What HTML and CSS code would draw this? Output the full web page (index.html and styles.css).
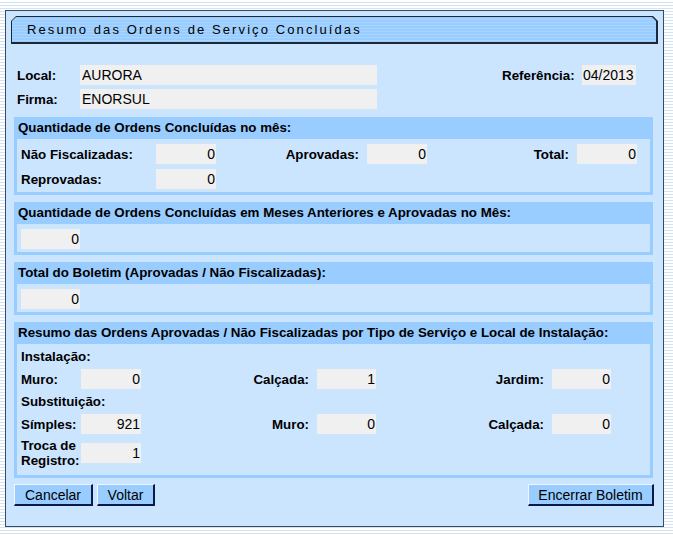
FILE: index.html
```html
<!DOCTYPE html>
<html lang="pt-BR">
<head>
    <meta charset="UTF-8">
    <title>Resumo das Ordens de Serviço Concluídas</title>
    <link rel="stylesheet" href="styles.css">
</head>
<body>
    <div class="panel">
        <!-- Title bar -->
        <div class="title-frame">
            <div class="title">Resumo das Ordens de Serviço Concluídas</div>
        </div>

        <div class="top-fields">
            <span class="lbl">Local:</span>
            <input class="field" type="text" value="AURORA" readonly>
            <span></span>
            <span class="lbl">Referência:</span>
            <input class="field ref" type="text" value="04/2013" readonly>
            <span class="lbl">Firma:</span>
            <input class="field" type="text" value="ENORSUL" readonly>
        </div>

        <!-- Month totals -->
        <div class="section">
            <div class="section-head">Quantidade de Ordens Concluídas no mês:</div>
            <div class="section-body grid-month">
                <span class="lbl">Não Fiscalizadas:</span>
                <input class="field num" type="text" value="0" readonly>
                <span class="lbl right">Aprovadas:</span>
                <input class="field num" type="text" value="0" readonly>
                <span class="lbl right">Total:</span>
                <input class="field num" type="text" value="0" readonly>
                <span class="lbl">Reprovadas:</span>
                <input class="field num" type="text" value="0" readonly>
            </div>
        </div>

        <div class="section">
            <div class="section-head">Quantidade de Ordens Concluídas em Meses Anteriores e Aprovadas no Mês:</div>
            <div class="section-body single">
                <input class="field num" type="text" value="0" readonly>
            </div>
        </div>

        <div class="section">
            <div class="section-head">Total do Boletim (Aprovadas / Não Fiscalizadas):</div>
            <div class="section-body single">
                <input class="field num" type="text" value="0" readonly>
            </div>
        </div>

        <!-- Summary by service type -->
        <div class="section">
            <div class="section-head">Resumo das Ordens Aprovadas / Não Fiscalizadas por Tipo de Serviço e Local de Instalação:</div>
            <div class="section-body grid-summary">
                <span class="lbl full">Instalação:</span>
                <span class="lbl">Muro:</span>
                <input class="field num" type="text" value="0" readonly>
                <span class="lbl right">Calçada:</span>
                <input class="field num" type="text" value="1" readonly>
                <span class="lbl right">Jardim:</span>
                <input class="field num" type="text" value="0" readonly>
                <span class="lbl full">Substituição:</span>
                <span class="lbl">Símples:</span>
                <input class="field num" type="text" value="921" readonly>
                <span class="lbl right">Muro:</span>
                <input class="field num" type="text" value="0" readonly>
                <span class="lbl right">Calçada:</span>
                <input class="field num" type="text" value="0" readonly>
                <span class="lbl wrap">Troca de Registro:</span>
                <input class="field num" type="text" value="1" readonly>
            </div>
        </div>

        <div class="buttons">
            <div class="btn-group">
                <button class="btn btn-cancel">Cancelar</button>
                <button class="btn btn-back">Voltar</button>
            </div>
            <button class="btn btn-close">Encerrar Boletim</button>
        </div>
    </div>
</body>
</html>
```

FILE: styles.css
```css
/* Page */
body {
    margin: 0;
    font-family: "Liberation Sans", Arial, sans-serif;
    color: #000;
    background: repeating-linear-gradient(to bottom, #ffffff 0, #ffffff 2px, #d3e3f4 2px, #d3e3f4 3px);
    height: 535px;
}

.panel {
    width: 659px;
    box-sizing: border-box;
    margin: 10px 0 0 5px;
    padding: 0 0 20px 0;
    border: 1px solid #3b4a5c;
    background-color: #cce5ff;
}

/* Title bar with cut corners */
.title-frame {
    width: 647px;
    height: 28px;
    box-sizing: border-box;
    margin: 5px 0 0 5px;
    padding: 1px 2px 2px 1px;
    background-color: #1c2836;
    clip-path: polygon(5px 0, calc(100% - 5px) 0, 100% 5px, 100% 100%, 0 100%, 0 5px);
}

.title {
    height: 25px;
    line-height: 25px;
    padding-left: 15px;
    font-size: 13px;
    letter-spacing: 2.1px;
    background: repeating-linear-gradient(to bottom, #99ccff 0, #99ccff 2px, #a9d5ff 2px, #a9d5ff 3px);
    clip-path: polygon(4px 0, calc(100% - 4px) 0, 100% 4px, 100% 100%, 0 100%, 0 4px);
}

/* Labels and fields */
.lbl {
    font-size: 13.33px;
    font-weight: bold;
    display: flex;
    align-items: center;
}

.lbl.right {
    justify-content: flex-end;
    padding-right: 8px;
}

.field {
    height: 20px;
    box-sizing: border-box;
    margin: 0;
    padding: 0 2px;
    border: none;
    outline: none;
    background-color: #f0f0f0;
    font-family: "Liberation Sans", Arial, sans-serif;
    font-size: 14px;
    color: #000;
    width: 100%;
}

.field.num {
    text-align: right;
    padding-right: 1px;
}

.field.ref {
    padding: 0 1px;
}

.top-fields {
    display: grid;
    grid-template-columns: 63px 297px 125px 80px 54px;
    grid-template-rows: 20px 20px;
    row-gap: 4px;
    margin: 21px 0 0 11px;
}

/* Sections */
.section {
    width: 639px;
    margin: 8px 0 0 8px;
    padding: 0 3px 3px 3px;
    box-sizing: border-box;
    background-color: #99ccff;
}

.section + .section {
    margin-top: 7px;
}

.section-head {
    height: 22px;
    line-height: 22px;
    padding-left: 1px;
    font-size: 13.33px;
    font-weight: bold;
}

.section-body {
    background-color: #cce5ff;
    padding: 5px 0 3px 4px;
}

.grid-month {
    display: grid;
    grid-template-columns: 135px 60px 151px 60px 150px 60px;
    grid-template-rows: 20px 20px;
    row-gap: 5px;
}

.single .field {
    width: 59px;
    display: block;
}

.grid-summary {
    display: grid;
    grid-template-columns: 60px 60px 176px 59px 176px 59px;
    grid-template-rows: 17px 20px 17px 20px 30px;
    row-gap: 4px;
    padding: 4px 0 7px 4px;
}

.grid-summary .full {
    grid-column: 1 / -1;
}

.grid-summary .wrap {
    line-height: 15px;
}

.grid-summary .wrap + .field {
    align-self: center;
}

/* Buttons */
.buttons {
    display: flex;
    justify-content: space-between;
    width: 640px;
    margin: 6px 0 0 8px;
}

.btn-group {
    display: flex;
    gap: 4px;
}

.btn {
    height: 22px;
    box-sizing: border-box;
    padding: 0;
    font-family: "Liberation Sans", Arial, sans-serif;
    font-size: 14px;
    color: #000;
    background-color: #99ccff;
    border-style: solid;
    border-width: 1px 2px 2px 1px;
    border-color: #eef6ff #0b1a4d #0b1a4d #eef6ff;
    cursor: pointer;
}

.btn-cancel {
    width: 79px;
}

.btn-back {
    width: 58px;
}

.btn-close {
    width: 126px;
}
```
